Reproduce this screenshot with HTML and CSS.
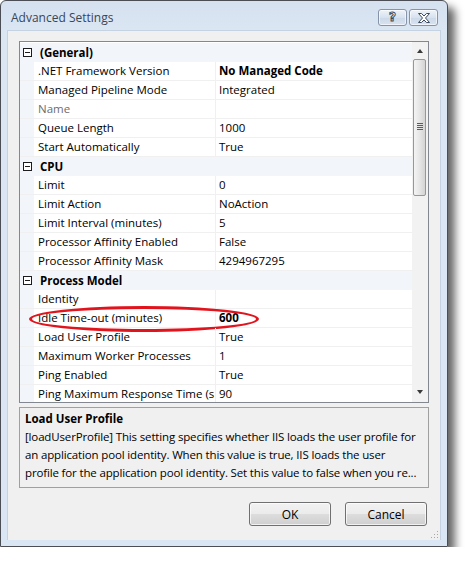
FILE: index.html
```html
<!DOCTYPE html>
<html>
<head>
<meta charset="utf-8">
<link rel="stylesheet" href="styles.css">
</head>
<body>
<div class="window">
  <div class="titlebar">
    <span class="title">Advanced Settings</span>
    <div class="caption-btns">
      <div class="cap help">?</div>
      <div class="cap close">
        <svg width="14" height="10" viewBox="0 0 14 10"><path d="M1.5 0.5 L4.5 0.5 L7 3 L9.5 0.5 L12.5 0.5 L8.5 5 L12.5 9.5 L9.5 9.5 L7 7 L4.5 9.5 L1.5 9.5 L5.5 5 Z" fill="#fff" stroke="#3b4a5e" stroke-width="1"/></svg>
      </div>
    </div>
  </div>
  <div class="client">
    <div class="grid">
      <div class="rows">
        <div class="row cat"><span class="toggle"></span><span class="cat-name">(General)</span></div>
        <div class="row"><span class="gut"></span><span class="name">.NET Framework Version</span><span class="val bold">No Managed Code</span></div>
        <div class="row"><span class="gut"></span><span class="name">Managed Pipeline Mode</span><span class="val">Integrated</span></div>
        <div class="row"><span class="gut"></span><span class="name dim">Name</span><span class="val"></span></div>
        <div class="row"><span class="gut"></span><span class="name">Queue Length</span><span class="val">1000</span></div>
        <div class="row"><span class="gut"></span><span class="name">Start Automatically</span><span class="val">True</span></div>
        <div class="row cat"><span class="toggle"></span><span class="cat-name">CPU</span></div>
        <div class="row"><span class="gut"></span><span class="name">Limit</span><span class="val">0</span></div>
        <div class="row"><span class="gut"></span><span class="name">Limit Action</span><span class="val">NoAction</span></div>
        <div class="row"><span class="gut"></span><span class="name">Limit Interval (minutes)</span><span class="val">5</span></div>
        <div class="row"><span class="gut"></span><span class="name">Processor Affinity Enabled</span><span class="val">False</span></div>
        <div class="row"><span class="gut"></span><span class="name">Processor Affinity Mask</span><span class="val">4294967295</span></div>
        <div class="row cat"><span class="toggle"></span><span class="cat-name">Process Model</span></div>
        <div class="row"><span class="gut"></span><span class="name">Identity</span><span class="val"></span></div>
        <div class="row highlight"><span class="gut"></span><span class="name">Idle Time-out (minutes)</span><span class="val bold">600</span><span class="ellipse"></span></div>
        <div class="row"><span class="gut"></span><span class="name">Load User Profile</span><span class="val">True</span></div>
        <div class="row"><span class="gut"></span><span class="name">Maximum Worker Processes</span><span class="val">1</span></div>
        <div class="row"><span class="gut"></span><span class="name">Ping Enabled</span><span class="val">True</span></div>
        <div class="row"><span class="gut"></span><span class="name">Ping Maximum Response Time (s</span><span class="val">90</span></div>
      </div>
      <div class="scrollbar">
        <div class="arrow up"></div>
        <div class="track">
          <div class="thumb"><span class="grip-lines"></span></div>
        </div>
        <div class="arrow down"></div>
      </div>
    </div>
    <div class="desc">
      <div class="desc-title">Load User Profile</div>
      <div class="desc-line">[loadUserProfile] This setting specifies whether IIS loads the user profile for</div>
      <div class="desc-line">an application pool identity. When this value is true, IIS loads the user</div>
      <div class="desc-line">profile for the application pool identity. Set this value to false when you re...</div>
    </div>
    <div class="buttons">
      <div class="btn">OK</div>
      <div class="btn">Cancel</div>
    </div>
    <div class="sizegrip"></div>
  </div>
</div>
</body>
</html>
```
FILE: styles.css
```css
html, body {
  margin: 0;
  padding: 0;
  background: #ffffff;
}
body {
  font-family: "Open Sans", "Noto Sans", sans-serif;
  font-size: 11.5px;
  color: #000;
}
.window {
  width: 448px;
  height: 547px;
  box-sizing: border-box;
  border: 1px solid #4b4f55;
  border-radius: 6px 6px 0 0;
  background: linear-gradient(#d5e1ef 0px, #dbe6f3 30px, #dae6f3 100%);
  display: flex;
  flex-direction: column;
  padding: 0 6px 6px 6px;
  box-shadow: 7px 7px 8px rgba(0,0,0,0.6);
}
.titlebar {
  height: 29px;
  display: flex;
  align-items: flex-start;
  justify-content: space-between;
}
.title {
  margin-left: 4px;
  margin-top: 8px;
  color: #3a4656;
  font-size: 12px;
}
.caption-btns {
  display: flex;
  gap: 2px;
  margin-top: 8px;
  margin-right: 3px;
}
.cap {
  width: 27px;
  height: 15px;
  border: 1px solid #8594a8;
  border-radius: 3px;
  background: linear-gradient(#eef3f9, #d7e2ef 50%, #cbd8e8 51%, #d8e3f0);
  display: flex;
  align-items: center;
  justify-content: center;
  box-shadow: inset 0 0 0 1px rgba(255,255,255,0.6);
}
.help {
  font-family: "DejaVu Sans", sans-serif;
  font-weight: bold;
  font-size: 12px;
  color: #fff;
  -webkit-text-stroke: 1px #3b4a5e;
  line-height: 15px;
}
.client {
  flex: 1;
  background: #f0f0f0;
  border: 1px solid #c5d2e2;
  border-bottom: none;
  display: flex;
  flex-direction: column;
  padding: 10px 11px 0 11px;
  position: relative;
}
.grid {
  height: 360px;
  border: 1px solid #828790;
  background: #fff;
  display: flex;
  overflow: hidden;
}
.rows {
  flex: 1;
  overflow: hidden;
  padding-top: 1px;
}
.row {
  height: 19px;
  display: flex;
  align-items: stretch;
  position: relative;
  box-sizing: border-box;
  border-bottom: 1px solid #f0f0f0;
  white-space: nowrap;
}
.row.cat {
  background: #f2f5fa;
  border-bottom: 1px solid #f2f5fa;
  align-items: center;
}
.toggle {
  width: 7px;
  height: 7px;
  border: 1px solid #1c1c1c;
  margin-left: 3px;
  margin-right: 7px;
  position: relative;
  background: #fff;
}
.toggle::after {
  content: "";
  position: absolute;
  left: 1px;
  right: 1px;
  top: 3px;
  height: 1px;
  background: #1c1c1c;
}
.cat-name {
  font-weight: bold;
  margin-left: 1px;
}
.gut {
  width: 14px;
  background: #f2f5fa;
  flex: none;
}
.name {
  width: 177px;
  padding-left: 4px;
  overflow: hidden;
  border-right: 1px solid #f0f0f0;
  line-height: 18px;
  flex: none;
}
.name.dim {
  color: #6d6d6d;
}
.val {
  flex: 1;
  padding-left: 3px;
  line-height: 18px;
}
.bold {
  font-weight: bold;
}
.ellipse {
  position: absolute;
  left: 9px;
  top: -3px;
  width: 224px;
  height: 20px;
  border: 3px solid #e1141d;
  border-radius: 50%;
}
.scrollbar {
  width: 16px;
  flex: none;
  background: #f2f2f2;
  display: flex;
  flex-direction: column;
}
.arrow {
  height: 17px;
  position: relative;
}
.arrow::after {
  content: "";
  position: absolute;
  left: 5px;
  width: 0;
  height: 0;
  border-left: 3.5px solid transparent;
  border-right: 3.5px solid transparent;
}
.arrow.up::after {
  top: 7px;
  border-bottom: 4px solid #3a3a3a;
}
.arrow.down::after {
  top: 5px;
  border-top: 4px solid #3a3a3a;
}
.track {
  flex: 1;
}
.thumb {
  height: 137px;
  width: 13px;
  margin-left: 1px;
  box-sizing: border-box;
  border: 1px solid #979797;
  border-radius: 2px;
  background: linear-gradient(90deg, #f4f4f4, #e6e6e6 50%, #d4d4d4);
  position: relative;
}
.grip-lines {
  position: absolute;
  left: 3px;
  top: 63px;
  width: 6px;
  height: 7px;
  background: repeating-linear-gradient(#5c5c5c 0 1px, transparent 1px 2px);
}
.desc {
  margin-top: 4px;
  height: 81px;
  border: 1px solid #a0a0a0;
  padding: 2px 5px 0 5px;
  box-sizing: border-box;
  white-space: nowrap;
  overflow: hidden;
}
.desc-title {
  font-weight: bold;
  line-height: 18px;
}
.desc-line {
  line-height: 18px;
  letter-spacing: -0.15px;
}
.buttons {
  display: flex;
  justify-content: flex-end;
  gap: 14px;
  margin-top: 14px;
  padding-right: 2px;
}
.btn {
  width: 80px;
  height: 22px;
  border: 1px solid #707070;
  border-radius: 3px;
  background: linear-gradient(#f2f2f2 0%, #ebebeb 50%, #dddddd 51%, #cfcfcf 100%);
  box-shadow: inset 0 0 0 1px rgba(255,255,255,0.7);
  display: flex;
  align-items: center;
  justify-content: center;
  font-size: 12px;
}
.sizegrip {
  position: absolute;
  right: 2px;
  bottom: 2px;
  width: 8px;
  height: 8px;
  background:
    radial-gradient(circle, #a8a8a8 0.7px, transparent 1px) 0 0 / 3px 3px;
  clip-path: polygon(100% 0, 100% 100%, 0 100%);
}
```
